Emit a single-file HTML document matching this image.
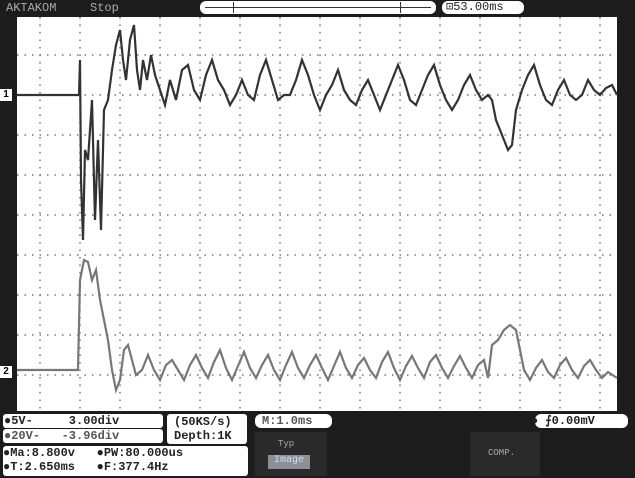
<!DOCTYPE html>
<html><head><style>
body{margin:0;width:635px;height:478px;background:#1c1c1c;overflow:hidden;font-family:"Liberation Mono",monospace;position:relative}
.t{position:absolute;font-size:12px;font-weight:bold;color:#222;white-space:nowrap;line-height:14px}
.w{position:absolute;background:#fff;border-radius:3px}
</style></head><body>
<svg width="635" height="478" style="position:absolute;left:0;top:0">
<rect x="17" y="17" width="600" height="394" fill="#fff"/>
<g stroke="#777" stroke-width="1.5" stroke-dasharray="1.5 6">
<line x1="40" y1="17" x2="40" y2="411"/><line x1="80" y1="17" x2="80" y2="411"/><line x1="120" y1="17" x2="120" y2="411"/><line x1="160" y1="17" x2="160" y2="411"/><line x1="200" y1="17" x2="200" y2="411"/><line x1="240" y1="17" x2="240" y2="411"/><line x1="280" y1="17" x2="280" y2="411"/><line x1="320" y1="17" x2="320" y2="411"/><line x1="360" y1="17" x2="360" y2="411"/><line x1="400" y1="17" x2="400" y2="411"/><line x1="440" y1="17" x2="440" y2="411"/><line x1="480" y1="17" x2="480" y2="411"/><line x1="520" y1="17" x2="520" y2="411"/><line x1="560" y1="17" x2="560" y2="411"/><line x1="600" y1="17" x2="600" y2="411"/>
<line x1="17" y1="55" x2="617" y2="55"/><line x1="17" y1="95" x2="617" y2="95"/><line x1="17" y1="135" x2="617" y2="135"/><line x1="17" y1="175" x2="617" y2="175"/><line x1="17" y1="215" x2="617" y2="215"/><line x1="17" y1="255" x2="617" y2="255"/><line x1="17" y1="295" x2="617" y2="295"/><line x1="17" y1="335" x2="617" y2="335"/><line x1="17" y1="375" x2="617" y2="375"/>
</g>
<polyline fill="none" stroke="#333" stroke-width="2.2" points="17,95 79,95 80,60 81,180 83,240 85,150 88,160 92,100 95,220 98,140 101,230 104,110 108,100 112,70 116,45 120,30 123,60 126,80 130,40 134,25 137,70 140,90 143,60 147,80 151,55 155,75 160,90 165,105 170,80 176,100 182,70 188,65 194,90 200,100 206,75 212,60 218,80 224,90 230,105 236,95 242,80 248,95 254,100 260,75 266,60 272,80 278,100 284,95 290,95 296,80 302,60 308,75 314,95 320,110 326,95 332,85 338,70 344,90 350,100 356,105 362,90 368,80 374,95 380,110 386,95 392,80 398,65 404,80 410,100 416,105 422,90 428,75 434,65 440,85 446,100 452,110 458,100 464,85 470,75 476,90 482,100 488,95 492,100 496,120 500,130 504,140 508,150 512,145 516,110 522,90 528,75 534,65 540,85 546,100 552,105 558,90 564,80 570,95 576,100 582,95 588,80 594,90 600,95 606,88 612,85 617,95"/>
<polyline fill="none" stroke="#777" stroke-width="2.2" points="17,370 78,370 80,280 84,260 88,262 92,280 96,270 100,300 104,320 108,340 112,370 116,390 120,380 124,350 128,345 132,360 136,375 142,370 148,355 154,370 160,380 166,365 172,360 178,370 184,380 190,365 196,355 202,368 208,378 214,362 220,350 226,368 232,380 238,366 244,352 250,368 256,378 262,365 268,355 274,370 280,380 286,365 292,352 298,368 304,378 310,365 316,355 322,368 328,380 334,366 340,352 346,368 352,378 358,365 364,358 370,370 376,378 382,362 388,352 394,368 400,380 406,366 412,356 418,368 424,378 430,362 436,355 442,368 448,378 454,366 460,356 466,368 472,378 478,365 484,360 488,378 492,345 498,340 504,330 510,325 516,330 520,350 524,370 530,380 536,368 542,360 548,372 554,378 560,365 566,358 572,370 578,378 584,366 590,360 596,370 602,378 608,372 614,376 617,378"/>
</svg>
<div class="t" style="left:6px;top:1px;color:#aaa;font-weight:normal">AKTAKOM</div>
<div class="t" style="left:90px;top:1px;color:#aaa;font-weight:normal">Stop</div>
<div class="w" style="left:200px;top:1px;width:236px;height:13px;border-radius:6px"></div>
<div style="position:absolute;left:205px;top:7px;width:226px;height:1px;background:#333"></div>
<div style="position:absolute;left:233px;top:2px;width:1px;height:11px;background:#333"></div>
<div style="position:absolute;left:400px;top:2px;width:1px;height:11px;background:#333"></div>
<div class="w" style="left:442px;top:1px;width:82px;height:13px;border-radius:6px"></div>
<div class="t" style="left:446px;top:0px;font-weight:normal">⊡53.00ms</div>
<div style="position:absolute;left:0;top:89px;width:12px;height:12px;background:#fff;font:bold 10px 'Liberation Sans';text-align:center;line-height:12px">1</div>
<div style="position:absolute;left:0;top:366px;width:12px;height:12px;background:#fff;font:bold 10px 'Liberation Sans';text-align:center;line-height:12px">2</div>
<div class="w" style="left:3px;top:414px;width:160px;height:14px"></div>
<div class="t" style="left:4px;top:414px">●5V-&nbsp;&nbsp;&nbsp;&nbsp;&nbsp;3.00div</div>
<div class="w" style="left:3px;top:429px;width:160px;height:14px"></div>
<div class="t" style="left:4px;top:429px;color:#555">●20V-&nbsp;&nbsp;&nbsp;-3.96div</div>
<div class="w" style="left:167px;top:414px;width:80px;height:30px"></div>
<div class="t" style="left:174px;top:415px">(50KS/s)<br>Depth:1K</div>
<div class="w" style="left:255px;top:414px;width:77px;height:14px;border-radius:6px"></div>
<div class="t" style="left:262px;top:414px;color:#555">M:1.0ms</div>
<div class="w" style="left:535px;top:414px;width:93px;height:14px;border-radius:6px"></div>
<div class="t" style="left:531px;top:414px">●&nbsp;⨍0.00mV</div>
<div class="w" style="left:3px;top:446px;width:245px;height:30px"></div>
<div class="t" style="left:3px;top:446px">●Ma:8.800v&nbsp;&nbsp;&nbsp;●PW:80.000us<br>●T:2.650ms&nbsp;&nbsp;&nbsp;●F:377.4Hz</div>
<div style="position:absolute;left:255px;top:432px;width:72px;height:44px;background:#2a2a2a"></div>
<div class="t" style="left:278px;top:437px;color:#aaa;font-size:9px;font-weight:normal">Typ</div>
<div style="position:absolute;left:268px;top:455px;width:42px;height:14px;background:#8b8f98;color:#dde;font-size:10px;text-align:center">Image</div>
<div style="position:absolute;left:470px;top:432px;width:70px;height:44px;background:#2a2a2a"></div>
<div class="t" style="left:488px;top:446px;color:#aaa;font-size:9px;font-weight:normal">COMP.</div>
</body></html>
